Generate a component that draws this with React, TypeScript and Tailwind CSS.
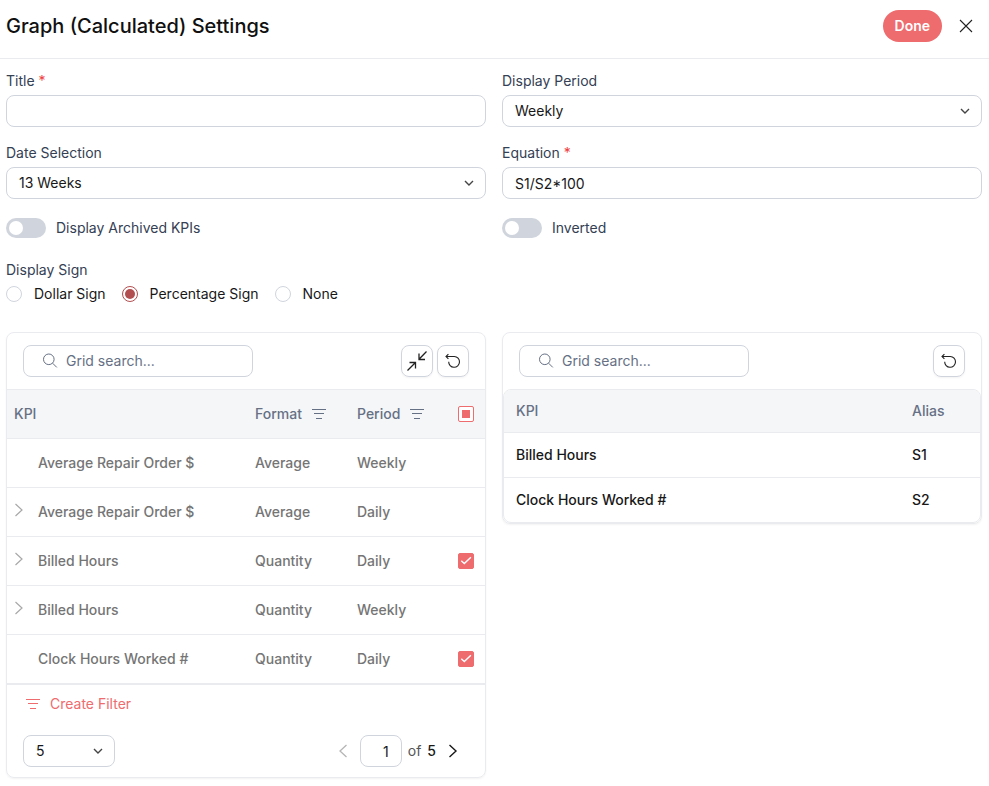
import { useState } from "react";

type KpiRow = { name: string; format: string; period: string; expandable: boolean; checked: boolean };

const KPIS: KpiRow[] = [
  { name: "Average Repair Order $", format: "Average", period: "Weekly", expandable: false, checked: false },
  { name: "Average Repair Order $", format: "Average", period: "Daily", expandable: true, checked: false },
  { name: "Billed Hours", format: "Quantity", period: "Daily", expandable: true, checked: true },
  { name: "Billed Hours", format: "Quantity", period: "Weekly", expandable: true, checked: false },
  { name: "Clock Hours Worked #", format: "Quantity", period: "Daily", expandable: false, checked: true },
];

const ALIASES = [
  { name: "Billed Hours", alias: "S1" },
  { name: "Clock Hours Worked #", alias: "S2" },
];

const SIGNS = ["Dollar Sign", "Percentage Sign", "None"];

export default function App() {
  const [sign, setSign] = useState("Percentage Sign");

  return (
    <div className="min-h-screen bg-white font-['Inter',sans-serif] text-sm text-[#181818]">
      <header className="flex h-[59px] items-center justify-between border-b border-[#eaebee] pr-[11px] pb-1.5 pl-1.5">
        <h1 className="text-xl leading-8 font-medium text-[#101010]">Graph (Calculated) Settings</h1>
        <div className="flex items-center gap-3">
          <button className="h-8 rounded-full bg-[#ee6b6e] px-3 font-semibold text-white">Done</button>
          <button aria-label="Close" className="flex size-6 items-center justify-center">
            <svg className="size-3.5" viewBox="0 0 14 14" fill="none" stroke="#222" strokeWidth="1.1">
              <path d="M1 1l12 12M13 1L1 13" />
            </svg>
          </button>
        </div>
      </header>

      <main className="pt-3 pr-[7px] pb-2 pl-1.5">
        <div className="grid grid-cols-2 gap-4">
          <Field id="title" label="Title" required>
            <input id="title" className="h-8 w-full rounded-lg border border-[#d0d5dd] px-3" />
          </Field>
          <Field id="display-period" label="Display Period">
            <Select id="display-period" options={["Weekly", "Daily", "Monthly"]} />
          </Field>
          <Field id="date-selection" label="Date Selection">
            <Select id="date-selection" options={["13 Weeks", "26 Weeks", "52 Weeks"]} />
          </Field>
          <Field id="equation" label="Equation" required>
            <input
              id="equation"
              defaultValue="S1/S2*100"
              className="h-8 w-full rounded-lg border border-[#d0d5dd] px-3"
            />
          </Field>
          <Toggle label="Display Archived KPIs" />
          <Toggle label="Inverted" />
        </div>

        <fieldset className="mt-[19px]">
          <legend className="h-5 leading-5 text-[#344054]">Display Sign</legend>
          <div className="flex h-7 items-center gap-4">
            {SIGNS.map((s) => (
              <label key={s} className="flex items-center gap-3">
                <input
                  type="radio"
                  name="sign"
                  checked={s === sign}
                  onChange={() => setSign(s)}
                  className="flex size-4 appearance-none items-center justify-center rounded-full border border-[#d0d5dd] checked:border-[#b34e50] checked:before:size-2.5 checked:before:rounded-full checked:before:bg-[#b34e50] checked:before:content-['']"
                />
                {s}
              </label>
            ))}
          </div>
        </fieldset>

        <div className="mt-6 grid grid-cols-2 items-start gap-4">
          <KpiGrid />
          <AliasGrid />
        </div>
      </main>
    </div>
  );
}

function Field({ id, label, required, children }: {
  id: string; label: string; required?: boolean; children: React.ReactNode;
}) {
  return (
    <div className="flex flex-col gap-1">
      <label htmlFor={id} className="h-5 leading-5 text-[#344054]">
        {label} {required && <span className="text-[#f03e3e]">*</span>}
      </label>
      {children}
    </div>
  );
}

function Select({ id, options, label }: { id: string; options: string[]; label?: string }) {
  return (
    <div className="relative">
      <select
        id={id}
        aria-label={label}
        className="h-8 w-full appearance-none rounded-lg border border-[#d0d5dd] bg-white px-3"
      >
        {options.map((o) => (
          <option key={o}>{o}</option>
        ))}
      </select>
      <svg
        className="pointer-events-none absolute top-3 right-3 h-2 w-2.5"
        viewBox="0 0 10 8"
        fill="none"
        stroke="#444"
        strokeWidth="1.4"
      >
        <path d="M1 2l4 4 4-4" />
      </svg>
    </div>
  );
}

function Toggle({ label }: { label: string }) {
  return (
    <label className="flex h-[26px] items-center gap-2.5 text-[#344054]">
      <input
        type="checkbox"
        role="switch"
        className="flex h-5 w-10 appearance-none items-center rounded-full bg-[#d0d5dd] px-[3px] before:size-3.5 before:rounded-full before:bg-white before:content-[''] checked:justify-end checked:bg-[#ee6b6e]"
      />
      {label}
    </label>
  );
}

function GridSearch() {
  return (
    <label className="flex h-8 w-[230px] items-center gap-2 rounded-lg border border-[#d0d5dd] pl-[18px]">
      <svg className="size-4 shrink-0" viewBox="0 0 16 16" fill="none" stroke="#667085">
        <circle cx="6.8" cy="6.3" r="5.3" />
        <path d="M10.6 10.2l4.2 4.2" />
      </svg>
      <input
        aria-label="Grid search"
        placeholder="Grid search..."
        className="w-full min-w-0 outline-none placeholder:text-[#667085]"
      />
    </label>
  );
}

function IconButton({ label, children }: { label: string; children: React.ReactNode }) {
  return (
    <button
      aria-label={label}
      className="flex size-8 items-center justify-center rounded-lg border border-[#d0d5dd] shadow-xs"
    >
      {children}
    </button>
  );
}

function ResetIcon() {
  return (
    <svg className="size-4" viewBox="0 0 16 16" fill="none" stroke="#222" strokeWidth="1.1">
      <path d="M1 3.5h8.3a5.4 5.4 0 1 1-5.6 5.2M3.4 1.1L1 3.5l2.4 2.4" />
    </svg>
  );
}

function FilterIcon() {
  return (
    <svg className="h-2.5 w-3.5" viewBox="0 0 14 10" fill="none" stroke="currentColor">
      <path d="M0 .5h14M2 4.5h10M4 9.5h6" />
    </svg>
  );
}

function Checkbox({ label, checked, mixed }: { label: string; checked?: boolean; mixed?: boolean }) {
  return (
    <span className="relative mx-auto block size-4">
      <input
        type="checkbox"
        aria-label={label}
        defaultChecked={checked}
        ref={(el) => {
          if (el) el.indeterminate = !!mixed;
        }}
        className="peer block size-4 appearance-none rounded-xs border border-[#ee6b6e] bg-white checked:bg-[#ee6b6e]"
      />
      <span className="pointer-events-none absolute inset-1 hidden bg-[#ee6b6e] peer-indeterminate:block" />
      <svg
        className="pointer-events-none absolute inset-0 hidden size-4 peer-checked:block"
        viewBox="0 0 16 16"
        fill="none"
        stroke="white"
        strokeWidth="1.4"
      >
        <path d="M3.3 7.8l3 2.8 6.6-6.4" />
      </svg>
    </span>
  );
}

function KpiGrid() {
  return (
    <section className="rounded-lg border border-[#eaebee] shadow-xs">
      <div className="flex items-center justify-between border-b border-[#eaebee] px-4 py-3">
        <GridSearch />
        <div className="flex gap-1">
          <IconButton label="Collapse all">
            <svg className="size-5 shrink-0" viewBox="0 0 20 20" fill="none" stroke="#222" strokeWidth="1.3">
              <path d="M19.5.5l-7.5 7.8M12 2.5v6h6M.5 19.5l8-8M2.5 11.5h6v6" />
            </svg>
          </IconButton>
          <IconButton label="Reset grid">
            <ResetIcon />
          </IconButton>
        </div>
      </div>

      <table className="w-full table-fixed border-separate border-spacing-0 text-left font-medium">
        <thead className="bg-[#f5f6f8] text-[#667085]">
          <tr className="h-[49px]">
            <th className="border-b border-[#eaebee] px-[7px] font-medium">KPI</th>
            <th className="w-[102px] border-b border-[#eaebee] px-[7px] font-medium">
              <span className="flex items-center gap-2.5">
                Format <FilterIcon />
              </span>
            </th>
            <th className="w-[97px] border-b border-[#eaebee] px-[7px] font-medium">
              <span className="flex items-center gap-2.5">
                Period <FilterIcon />
              </span>
            </th>
            <th className="w-[38px] border-b border-[#eaebee]">
              <Checkbox label="Select all" mixed />
            </th>
          </tr>
        </thead>
        <tbody className="text-[#757575]">
          {KPIS.map((row, i) => (
            <tr key={i} className="h-[49px]">
              <td className="border-b border-[#eaebee] px-[7px]">
                <span className="flex items-center">
                  <span className="w-6">
                    {row.expandable && (
                      <button aria-label="Expand" className="block pb-1">
                        <svg className="h-3.5 w-2.5" viewBox="0 0 10 14" fill="none" stroke="#a8a8a8" strokeWidth="1.2">
                          <path d="M1.5 1L8 7l-6.500 6" />
                        </svg>
                      </button>
                    )}
                  </span>
                  {row.name}
                </span>
              </td>
              <td className="border-b border-[#eaebee] px-[7px]">{row.format}</td>
              <td className="border-b border-[#eaebee] px-[7px]">{row.period}</td>
              <td className="border-b border-[#eaebee]">
                {row.checked && <Checkbox label={`Select ${row.name}`} checked />}
              </td>
            </tr>
          ))}
        </tbody>
      </table>

      <div className="border-t border-[#eaebee] px-[19px] pt-[9px] pb-[11px]">
        <button className="flex h-5 items-center gap-2.5 text-[#ee6b6e]">
          <FilterIcon />
          Create Filter
        </button>
      </div>

      <div className="flex items-center justify-between px-4 py-2.5">
        <div className="w-[92px]">
          <Select id="page-size" label="Rows per page" options={["5", "10", "20"]} />
        </div>
        <div className="flex items-center gap-1.5 pr-[11px]">
          <button aria-label="Previous page" disabled className="mr-1.5">
            <svg className="h-3.5 w-2.5" viewBox="0 0 10 14" fill="none" stroke="#b5b5b5" strokeWidth="1.3">
              <path d="M8.5 1L2 7l6.500 6" />
            </svg>
          </button>
          <input
            aria-label="Page"
            defaultValue="1"
            className="h-8 w-[42px] rounded-lg border border-[#d0d5dd] px-3 text-right"
          />
          <span className="text-[#555]">of</span>
          <span className="font-medium">5</span>
          <button aria-label="Next page" className="ml-1.5">
            <svg className="h-3.5 w-2.5" viewBox="0 0 10 14" fill="none" stroke="#181818" strokeWidth="1.4">
              <path d="M1.500 1L8 7l-6.500 6" />
            </svg>
          </button>
        </div>
      </div>
    </section>
  );
}

function AliasGrid() {
  return (
    <section className="rounded-lg border border-[#eaebee] shadow-xs">
      <div className="flex items-center justify-between px-4 py-3">
        <GridSearch />
        <IconButton label="Reset grid">
          <ResetIcon />
        </IconButton>
      </div>
      <div className="overflow-hidden rounded-lg border border-[#eaebee]">
        <table className="w-full table-fixed border-separate border-spacing-0 text-left">
          <thead className="bg-[#f5f6f8] text-[#667085]">
            <tr className="h-[43px]">
              <th className="border-b border-[#eaebee] px-3 font-medium">KPI</th>
              <th className="w-20 border-b border-[#eaebee] px-3 font-medium">Alias</th>
            </tr>
          </thead>
          <tbody className="font-medium">
            {ALIASES.map((row) => (
              <tr key={row.alias} className="group h-[45px] last:h-11">
                <td className="border-b border-[#eaebee] px-3 group-last:border-b-0">{row.name}</td>
                <td className="border-b border-[#eaebee] px-3 group-last:border-b-0">{row.alias}</td>
              </tr>
            ))}
          </tbody>
        </table>
      </div>
    </section>
  );
}
